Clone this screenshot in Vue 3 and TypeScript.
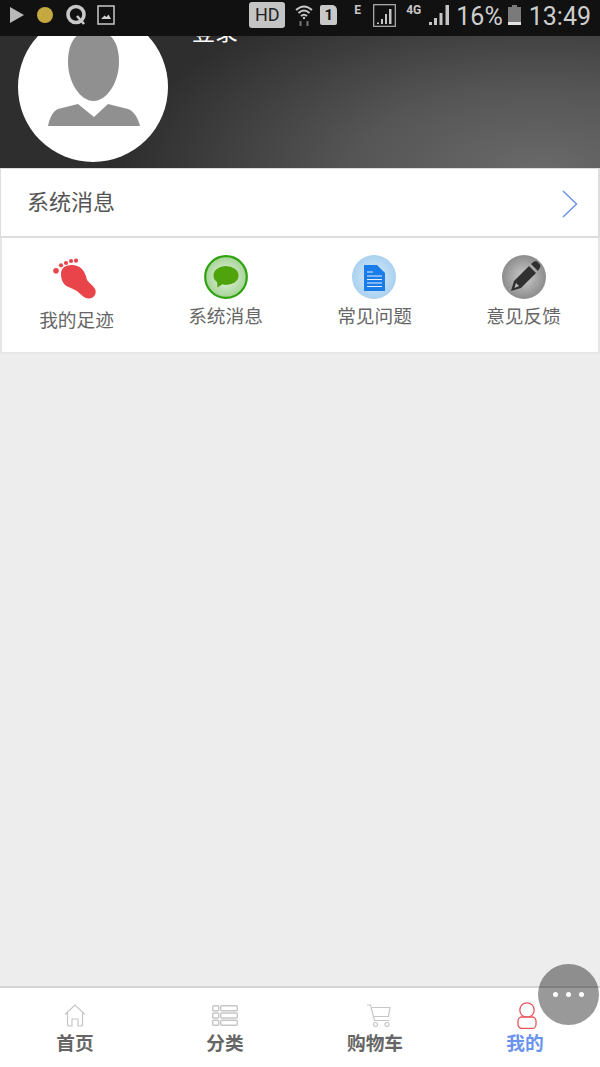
<script setup lang="ts">
const shortcuts = [
  { key: 'foot', label: '我的足迹' },
  { key: 'msg', label: '系统消息' },
  { key: 'faq', label: '常见问题' },
  { key: 'edit', label: '意见反馈' }
]
const tabs = [
  { key: 'home', label: '首页' },
  { key: 'list', label: '分类' },
  { key: 'cart', label: '购物车' },
  { key: 'me', label: '我的' }
]
</script>

<template>
  <div class="page">
    <div class="status">
      <div class="status-left">
        <svg width="14" height="16" viewBox="0 0 14 16"><path d="M0 0 14 8 0 16z" fill="#b9b9b9" /></svg>
        <span class="dot"></span>
        <svg width="22" height="22" viewBox="0 0 22 22">
          <circle cx="11" cy="10.500" r="8" fill="none" stroke="#c9c9c9" stroke-width="3.600" />
          <path d="M12 12 19 20" stroke="#c9c9c9" stroke-width="2.600" />
        </svg>
        <svg width="18" height="20" viewBox="0 0 18 20">
          <rect x="1" y="1" width="16" height="18" fill="none" stroke="#bdbdbd" stroke-width="1.600" />
          <path d="M4 14 7.500 10.500 9.500 12 11.500 9.500 14 14z" fill="#d0d0d0" />
        </svg>
      </div>
      <div class="status-right">
        <span class="hd">HD</span>
        <svg class="s-wifi" width="18" height="24" viewBox="0 0 18 24" fill="none" stroke="#c4c4c4" stroke-width="2">
          <path d="M1 7Q9 0 17 7" />
          <path d="M3.500 10Q9 5 14.500 10" />
          <path d="M6 13Q9 10.500 12 13" />
          <circle cx="9" cy="15" r="1.200" fill="#c4c4c4" stroke="none" />
          <path d="M5.500 18V23M12.500 18V23" stroke="#777" />
        </svg>
        <span class="sim">1</span>
        <span class="tiny s-e">E</span>
        <svg class="s-box" width="23" height="23" viewBox="0 0 23 23">
          <rect x="0.700" y="0.700" width="21.600" height="21.600" fill="none" stroke="#b5b5b5" stroke-width="1.200" />
          <path d="M4 18.500h2v1.500h-2zM8 15h2v5h-2zM12 10h2v10h-2zM16 5h2.500v15h-2.500z" fill="#c4c4c4" />
        </svg>
        <span class="tiny s-4g">4G</span>
        <svg class="s-bars" width="21" height="20" viewBox="0 0 21 20">
          <path d="M0 17h3v3h-3zM5 13h3v7h-3zM10.500 8h3v12h-3zM16.500 0h3.500v20h-3.500z" fill="#c4c4c4" />
        </svg>
        <span class="pct">16%</span>
        <svg class="s-batt" width="13" height="20" viewBox="0 0 13 20">
          <path d="M4 0h5v2h4v18h-13v-18h4z" fill="#7a7a7a" />
          <rect y="17" width="13" height="3" fill="#e4e4e4" />
        </svg>
        <span class="time">13:49</span>
      </div>
    </div>

    <header class="profile">
      <div class="avatar">
        <svg width="150" height="150" viewBox="0 0 150 150">
          <path d="M75.500 89C62 89 50 70 50 50 50 28 60 18 75.500 18 91 18 101 28 101 50 101 70 89 89 75.500 89z" fill="#909090" />
          <path d="M30 114C32 105 35 99 40 97L60 92 76 105 90 92 110 97C116 99 120 106 122 114z" fill="#909090" />
        </svg>
      </div>
      <div class="login">登录</div>
    </header>

    <div class="row">
      <span>系统消息</span>
      <svg width="18" height="28" viewBox="0 0 18 28" fill="none" stroke="#6b96e8" stroke-width="1.500">
        <path d="M2 1 15.500 14 2 27" />
      </svg>
    </div>

    <div class="grid">
      <div v-for="s in shortcuts" :key="s.key" class="cell" :class="'cell-' + s.key">
        <svg v-if="s.key === 'foot'" class="ico" width="44" height="44" viewBox="0 0 44 44">
          <g fill="#e8444a">
            <path d="M9 19C9 12 15 9.500 21 10 28 10.500 33 15 35 25 37 28 42 31 43.500 35 44.500 40 41 43.500 36.500 43.500 32 43.500 29 39 24 35.500 20 33 16 32.500 13 30 10 27 9 23 9 19z" />
            <circle cx="4" cy="15.700" r="2.800" />
            <circle cx="9" cy="10.300" r="2.100" />
            <circle cx="14" cy="8" r="2.100" />
            <circle cx="19" cy="6" r="2.100" />
            <circle cx="24" cy="5.700" r="2.100" />
          </g>
        </svg>
        <svg v-else-if="s.key === 'msg'" class="ico" width="44" height="44" viewBox="0 0 44 44">
          <defs>
            <radialGradient id="gm"><stop offset="0" stop-color="#e8f4e3" /><stop offset="1" stop-color="#a5d496" /></radialGradient>
          </defs>
          <circle cx="22" cy="22" r="20.800" fill="url(#gm)" stroke="#2ea30e" stroke-width="2.200" />
          <ellipse cx="22" cy="20.500" rx="12.500" ry="9.500" fill="#4fa30c" />
          <path d="M13 25 13.500 32.500 20 28z" fill="#4fa30c" />
        </svg>
        <svg v-else-if="s.key === 'faq'" class="ico" width="44" height="44" viewBox="0 0 44 44">
          <defs>
            <radialGradient id="gf"><stop offset="0" stop-color="#dcecf9" /><stop offset="1" stop-color="#a9d1f0" /></radialGradient>
          </defs>
          <circle cx="22" cy="22" r="22" fill="url(#gf)" />
          <path d="M12 10h13l8 8v18h-21z" fill="#1a7ce8" />
          <path d="M15 17h6M15 21h15M15 24.500h15M15 28h15M15 31.500h15" stroke="#e4f0fc" stroke-width="1.200" />
        </svg>
        <svg v-else class="ico" width="44" height="44" viewBox="0 0 44 44">
          <defs>
            <radialGradient id="ge"><stop offset="0" stop-color="#cdcdcd" /><stop offset="1" stop-color="#8c8c8c" /></radialGradient>
          </defs>
          <circle cx="22" cy="22" r="22" fill="url(#ge)" />
          <path d="M9 36 12 26 27 11 34 18 19 33z" fill="#303030" />
          <path d="M29 9 32 6.500C33 6 34 6 35 6.500L38 9.500C38.500 10.500 38.500 11.500 38 12.500L36 16z" fill="#303030" />
          <path d="M12.500 33 14 28 17 31z" fill="#bdbdbd" />
        </svg>
        <span class="cell-label">{{ s.label }}</span>
      </div>
    </div>

    <main class="body"></main>

    <nav class="tabbar">
      <div v-for="t in tabs" :key="t.key" class="tab" :class="{ active: t.key === 'me' }">
        <div class="tab-ico">
          <svg v-if="t.key === 'home'" width="22" height="23" viewBox="0 0 22 23" fill="none" stroke="#c6c6c6" stroke-width="1.200">
            <path d="M1 10.500 11 1 21 10.500M3.500 8.500V20C3.500 21.500 4.500 22 5.500 22H8V15H14V22H16.500C17.500 22 18.500 21.500 18.500 20V8.500" />
          </svg>
          <svg v-else-if="t.key === 'list'" width="26" height="21" viewBox="0 0 26 21" fill="none" stroke="#c6c6c6" stroke-width="1.400">
            <rect x="0.700" y="0.700" width="6" height="5" rx="1" />
            <rect x="0.700" y="8" width="6" height="5" rx="1" />
            <rect x="0.700" y="15.300" width="6" height="5" rx="1" />
            <rect x="8.700" y="0.700" width="16.600" height="5" rx="1" />
            <rect x="8.700" y="8" width="16.600" height="5" rx="1" />
            <rect x="8.700" y="15.300" width="16.600" height="5" rx="1" />
          </svg>
          <svg v-else-if="t.key === 'cart'" class="cart" width="24" height="23" viewBox="0 0 24 23" fill="none" stroke="#c6c6c6" stroke-width="1.200">
            <path d="M0 1H3.500L7.500 16.500H22" />
            <path d="M4.500 3.500H23L21.500 12.500H6.800" />
            <circle cx="8.500" cy="20.500" r="2" />
            <circle cx="20" cy="20.500" r="2" />
          </svg>
          <svg v-else class="person" width="20" height="27" viewBox="0 0 20 27" fill="none" stroke="#e8565a" stroke-width="1.300">
            <circle cx="10" cy="8" r="7.200" />
            <rect x="1" y="15" width="18" height="11.400" rx="4" fill="#fff" />
          </svg>
        </div>
        <span class="tab-label">{{ t.label }}</span>
      </div>
    </nav>

    <div class="fab"><i></i><i></i><i></i></div>
  </div>
</template>

<style scoped>
.page {
  position: relative;
  display: flex;
  flex-direction: column;
  height: 1067px;
  overflow: hidden;
  background: #ededed;
  font-family: 'Liberation Sans', 'Noto Sans CJK SC', sans-serif;
}

.status {
  display: flex;
  justify-content: space-between;
  align-items: center;
  height: 36px;
  flex: none;
  background: #111;
  color: #c8c8c8;
  font-family: Roboto, 'Liberation Sans', sans-serif;
}

.status-left {
  display: flex;
  align-items: center;
  gap: 13px;
  padding-left: 10px;
  padding-bottom: 6px;
}

.status-left svg:nth-of-type(2) {
  margin-left: -1px;
  margin-right: -3px;
}

.dot {
  width: 16px;
  height: 16px;
  border-radius: 50%;
  background: #c5a840;
}

.status-right {
  display: flex;
  align-items: center;
  padding-right: 9px;
  padding-bottom: 6px;
}

.hd {
  width: 36px;
  height: 26px;
  border-radius: 3px;
  background: #c4c4c4;
  color: #222;
  font-size: 18px;
  line-height: 26px;
  text-align: center;
}

.s-wifi {
  margin-left: 10px;
}

.sim {
  width: 17px;
  height: 20px;
  margin-left: 7px;
  border-radius: 2px 5px 2px 2px;
  background: #c8c8c8;
  color: #111;
  font-size: 15px;
  font-weight: 700;
  line-height: 20px;
  text-align: center;
}

.tiny {
  align-self: flex-start;
  color: #c8c8c8;
  font-size: 12px;
  font-weight: 700;
  line-height: 12px;
  margin-top: 5px;
}

.s-e {
  margin-left: 17px;
  width: 7px;
}

.s-box {
  margin-left: 12px;
}

.s-4g {
  margin-left: 10px;
  width: 16px;
  white-space: nowrap;
  letter-spacing: -0.3px;
}

.s-bars {
  margin-left: 7px;
}

.pct {
  margin-left: 6px;
  margin-top: 3px;
  font-size: 25px;
  line-height: 30px;
  color: #cdcdcd;
}

.s-batt {
  margin-left: 5px;
}

.time {
  margin-left: 8px;
  margin-top: 3px;
  font-size: 25px;
  line-height: 30px;
  color: #cdcdcd;
}

.profile {
  display: flex;
  flex: none;
  height: 132px;
  overflow: hidden;
  padding-left: 18px;
  background: radial-gradient(ellipse 420px 190px at 540px 135px, #6a6a6a 0%, #555 45%, #3c3c3c 80%, #2e2e2e 100%);
}

.avatar {
  flex: none;
  width: 150px;
  height: 150px;
  margin-top: -24px;
  border-radius: 50%;
  background: #fff;
}

.login {
  margin: -19px 0 0 24px;
  color: #fff;
  font-size: 23px;
  line-height: 30px;
}

.row {
  display: flex;
  flex: none;
  justify-content: space-between;
  align-items: center;
  box-sizing: border-box;
  height: 70px;
  padding: 0 19px 0 27px;
  background: #fff;
  border: 1px solid #ddd;
  border-bottom-width: 2px;
  border-right-width: 2px;
  color: #555;
  font-size: 22px;
}

.row span {
  margin-bottom: 6px;
  margin-left: -1px;
}

.row svg {
  margin-top: 3px;
}

.grid {
  display: grid;
  flex: none;
  grid-template-columns: repeat(4, 1fr);
  box-sizing: border-box;
  height: 116px;
  padding-top: 17px;
  background: #fff;
  border: 2px solid #e6e6e6;
  border-top: 0;
}

.cell {
  display: flex;
  flex-direction: column;
  align-items: center;
}

.ico {
  display: block;
  flex: none;
}

.cell-foot .ico {
  margin-left: -5px;
}

.cell-faq .ico {
  margin-left: -2px;
}

.cell-label {
  margin-top: 4px;
  color: #666;
  font-size: 18.700px;
  line-height: 28px;
}

.cell-foot .cell-label {
  margin-top: 8px;
}

.body {
  flex: 1;
}

.tabbar {
  display: grid;
  flex: none;
  grid-template-columns: repeat(4, 1fr);
  box-sizing: border-box;
  height: 81px;
  padding-top: 14px;
  background: #fff;
  border-top: 2px solid #d4d4d4;
}

.tab {
  display: flex;
  flex-direction: column;
  align-items: center;
}

.tab-ico {
  display: flex;
  align-items: center;
  justify-content: center;
  height: 27px;
}

.tab-ico svg {
  display: block;
  flex: none;
}

.tab-ico .cart {
  margin-left: 7px;
}

.tab-ico .person {
  margin-left: 4px;
}

.tab-label {
  height: 24px;
  margin-top: 3px;
  color: #666;
  font-size: 18.700px;
  font-weight: 700;
  line-height: 24px;
}

.tab.active .tab-label {
  color: #6a93ee;
}

.fab {
  position: absolute;
  left: 538px;
  top: 964px;
  display: flex;
  align-items: center;
  justify-content: center;
  gap: 8px;
  width: 61px;
  height: 61px;
  border-radius: 50%;
  background: rgba(0, 0, 0, 0.4);
}

.fab i {
  width: 5px;
  height: 5px;
  border-radius: 50%;
  background: #fff;
}
</style>
